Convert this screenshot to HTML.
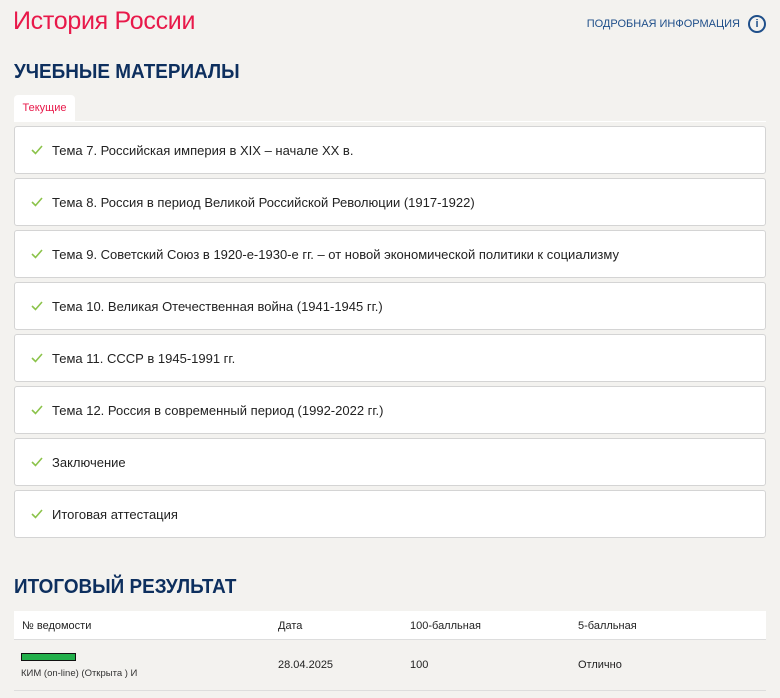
<!DOCTYPE html>
<html><head><meta charset="utf-8"><style>
body{margin:0;background:#f3f2ef;font-family:"Liberation Sans",sans-serif;width:780px;height:698px;overflow:hidden;position:relative}
.a{position:absolute}
h1{position:absolute;left:13px;top:7px;margin:0;font-size:25px;font-weight:normal;color:#e8194a;letter-spacing:-0.3px}
.info{position:absolute;right:14px;top:15px;font-size:11px;color:#1f4f8a;display:flex;align-items:center;gap:8px}
.info span.i{width:14px;height:14px;border:2px solid #1f4f8a;border-radius:50%;display:inline-block;text-align:center;font-weight:bold;font-size:11px;line-height:14px}
h2{position:absolute;left:14px;margin:0;font-size:20px;font-weight:bold;color:#0d2f5e;transform:scaleX(0.945);transform-origin:left}
.tab{position:absolute;left:14px;top:95px;width:61px;height:26px;background:#fff;border-radius:4px 4px 0 0;color:#e8194a;font-size:11px;line-height:26px;text-align:center}
.line{position:absolute;left:14px;top:121px;width:752px;height:1px;background:#fff}
.item{position:absolute;left:14px;width:750px;height:46px;background:#fff;border:1px solid #d4d4d4;border-radius:3px;font-size:13px;color:#222;line-height:48px}
.item b{font-weight:normal;position:absolute;left:37px}
.item svg{position:absolute;left:16px;top:18px}
.th{position:absolute;top:611px;left:14px;width:752px;height:28px;background:#fff;border-bottom:1px solid #ddd}
.row{position:absolute;top:640px;left:14px;width:752px;height:50px;border-bottom:1px solid #ddd}
.t{position:absolute;font-size:11px;color:#222}
</style></head><body>
<h1>История России</h1>
<div class="info">ПОДРОБНАЯ ИНФОРМАЦИЯ <span class="i">i</span></div>
<h2 style="top:61px">УЧЕБНЫЕ МАТЕРИАЛЫ</h2>
<div class="tab">Текущие</div>
<div class="line"></div>
<div class="item" style="top:126px"><svg width="12" height="10"><path d="M1 5l3.5 3.5L11 1" stroke="#8bc34a" stroke-width="1.6" fill="none"/></svg><b>Тема 7. Российская империя в XIX – начале XX в.</b></div>
<div class="item" style="top:178px"><svg width="12" height="10"><path d="M1 5l3.5 3.5L11 1" stroke="#8bc34a" stroke-width="1.6" fill="none"/></svg><b>Тема 8. Россия в период Великой Российской Революции (1917-1922)</b></div>
<div class="item" style="top:230px"><svg width="12" height="10"><path d="M1 5l3.5 3.5L11 1" stroke="#8bc34a" stroke-width="1.6" fill="none"/></svg><b>Тема 9. Советский Союз в 1920-е-1930-е гг. – от новой экономической политики к социализму</b></div>
<div class="item" style="top:282px"><svg width="12" height="10"><path d="M1 5l3.5 3.5L11 1" stroke="#8bc34a" stroke-width="1.6" fill="none"/></svg><b>Тема 10. Великая Отечественная война (1941-1945 гг.)</b></div>
<div class="item" style="top:334px"><svg width="12" height="10"><path d="M1 5l3.5 3.5L11 1" stroke="#8bc34a" stroke-width="1.6" fill="none"/></svg><b>Тема 11. СССР в 1945-1991 гг.</b></div>
<div class="item" style="top:386px"><svg width="12" height="10"><path d="M1 5l3.5 3.5L11 1" stroke="#8bc34a" stroke-width="1.6" fill="none"/></svg><b>Тема 12. Россия в современный период (1992-2022 гг.)</b></div>
<div class="item" style="top:438px"><svg width="12" height="10"><path d="M1 5l3.5 3.5L11 1" stroke="#8bc34a" stroke-width="1.6" fill="none"/></svg><b>Заключение</b></div>
<div class="item" style="top:490px"><svg width="12" height="10"><path d="M1 5l3.5 3.5L11 1" stroke="#8bc34a" stroke-width="1.6" fill="none"/></svg><b>Итоговая аттестация</b></div>
<h2 style="top:576px">ИТОГОВЫЙ РЕЗУЛЬТАТ</h2>
<div class="th"></div>
<div class="row"></div>
<div class="t" style="left:22px;top:620px">№ ведомости</div>
<div class="t" style="left:278px;top:620px">Дата</div>
<div class="t" style="left:410px;top:620px">100-балльная</div>
<div class="t" style="left:578px;top:620px">5-балльная</div>
<div class="a" style="left:21px;top:653px;width:53px;height:6px;background:#22b04b;border:1px solid #111"></div>
<div class="t" style="left:21px;top:668px;font-size:9.5px;color:#333">КИМ (on-line) (Открыта ) И</div>
<div class="t" style="left:278px;top:659px">28.04.2025</div>
<div class="t" style="left:410px;top:659px">100</div>
<div class="t" style="left:578px;top:659px">Отлично</div>
</body></html>
